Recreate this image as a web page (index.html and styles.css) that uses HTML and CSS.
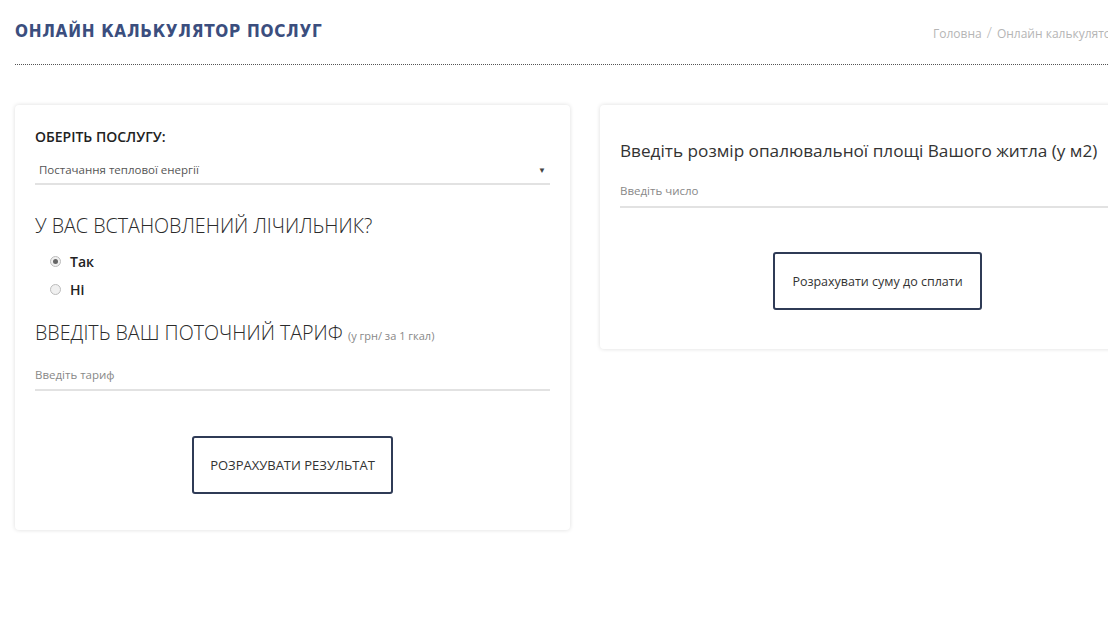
FILE: index.html
```html
<!DOCTYPE html>
<html lang="uk">
<head>
<meta charset="utf-8">
<title>Онлайн калькулятор послуг</title>
<link rel="stylesheet" href="styles.css">
</head>
<body>
<div class="page">
  <header class="head">
    <h1 class="title">ОНЛАЙН КАЛЬКУЛЯТОР ПОСЛУГ</h1>
    <div class="crumbs"><span>Головна</span><span class="sep">/</span><span>Онлайн калькулятор послуг</span></div>
  </header>
  <div class="cards">
    <section class="card card-left">
      <div class="label">ОБЕРІТЬ ПОСЛУГУ:</div>
      <div class="select"><span>Постачання теплової енергії</span><span class="arrow">▼</span></div>
      <h2 class="q">У ВАС ВСТАНОВЛЕНИЙ ЛІЧИЛЬНИК?</h2>
      <div class="radios">
        <div class="radio"><span class="dot checked"></span><span class="rlabel">Так</span></div>
        <div class="radio"><span class="dot"></span><span class="rlabel">Ні</span></div>
      </div>
      <h2 class="q q2">ВВЕДІТЬ ВАШ ПОТОЧНИЙ ТАРИФ <small>(у грн/ за 1 гкал)</small></h2>
      <div class="field">Введіть тариф</div>
      <div class="btnrow"><div class="btn btn-big">РОЗРАХУВАТИ РЕЗУЛЬТАТ</div></div>
    </section>
    <section class="card card-right">
      <h2 class="q3">Введіть розмір опалювальної площі Вашого житла (у м2)</h2>
      <div class="field field2">Введіть число</div>
      <div class="btnrow btnrow2"><div class="btn btn-small">Розрахувати суму до сплати</div></div>
    </section>
  </div>
</div>
</body>
</html>
```
FILE: styles.css
```css
html {
  overflow: hidden;
}
html, body {
  margin: 0;
  padding: 0;
  background: #fff;
}
body {
  font-family: "Open Sans", "Noto Sans", sans-serif;
  color: #333;
}
.page {
  width: 1155px;
  padding-left: 15px;
  padding-bottom: 40px;
}
.head {
  display: flex;
  justify-content: space-between;
  align-items: center;
  height: 64px;
  border-bottom: 1px dotted #555;
}
.title {
  margin: 0;
  font-family: "DejaVu Sans Condensed", "DejaVu Sans", sans-serif;
  font-weight: bold;
  font-size: 17px;
  letter-spacing: 0.7px;
  color: #3b4e7e;
  padding-bottom: 2px;
}
.crumbs {
  font-size: 12px;
  color: #b5b5b5;
  padding-right: 10px;
}
.crumbs .sep {
  margin: 0 5px;
  font-size: 15px;
  font-weight: 300;
}
.cards {
  display: flex;
  gap: 30px;
  align-items: flex-start;
  margin-top: 40px;
}
.card {
  width: 555px;
  box-sizing: border-box;
  background: #fff;
  border-radius: 4px;
  box-shadow: 0 0 4px rgba(0,0,0,0.14);
  padding: 20px 20px 36px;
}
.label {
  font-size: 14px;
  font-weight: 600;
  color: #222;
  line-height: 20px;
  margin-top: 2px;
}
.select {
  display: flex;
  justify-content: space-between;
  align-items: center;
  height: 28px;
  margin-top: 8px;
  padding: 0 4px;
  font-size: 11.5px;
  color: #555;
  border-bottom: 2px solid #e2e2e2;
}
.arrow {
  font-size: 8px;
  color: #444;
}
.q {
  margin: 28px 0 0;
  font-weight: 300;
  font-size: 19.7px;
  line-height: 26px;
  color: #2b2b2b;
}
.q small {
  font-size: 11px;
  color: #888;
  font-weight: 400;
}
.radios {
  margin-top: 8px;
  padding-left: 15px;
}
.radio {
  display: flex;
  align-items: center;
  height: 28px;
}
.dot {
  width: 11px;
  height: 11px;
  box-sizing: border-box;
  border: 1px solid #bcbcbc;
  border-radius: 50%;
  background: #f0f0f0;
  margin-right: 9px;
  position: relative;
}
.dot.checked::after {
  content: "";
  position: absolute;
  left: 2px;
  top: 2px;
  width: 5px;
  height: 5px;
  border-radius: 50%;
  background: #666;
}
.rlabel {
  font-size: 14px;
  font-weight: 600;
  color: #222;
}
.q2 {
  margin-top: 17px;
}
.field {
  margin-top: 12px;
  height: 28px;
  font-size: 11.5px;
  color: #888;
  border-bottom: 2px solid #e2e2e2;
  line-height: 28px;
}
.btnrow {
  display: flex;
  justify-content: center;
  margin-top: 45px;
}
.btn {
  display: flex;
  align-items: center;
  justify-content: center;
  height: 58px;
  box-sizing: border-box;
  border: 2px solid #2f3b56;
  border-radius: 3px;
  font-size: 13px;
  color: #333;
}
.btn-big {
  width: 201px;
}
.btn-small {
  width: 209px;
  font-size: 12.5px;
}
.card-right {
  padding-bottom: 39px;
}
.q3 {
  margin: 13px 0 0;
  font-weight: 400;
  font-size: 17.2px;
  line-height: 26px;
  color: #333;
  white-space: nowrap;
}
.field2 {
  margin-top: 12px;
  height: 30px;
  line-height: 30px;
}
.btnrow2 {
  margin-top: 44px;
}
```
